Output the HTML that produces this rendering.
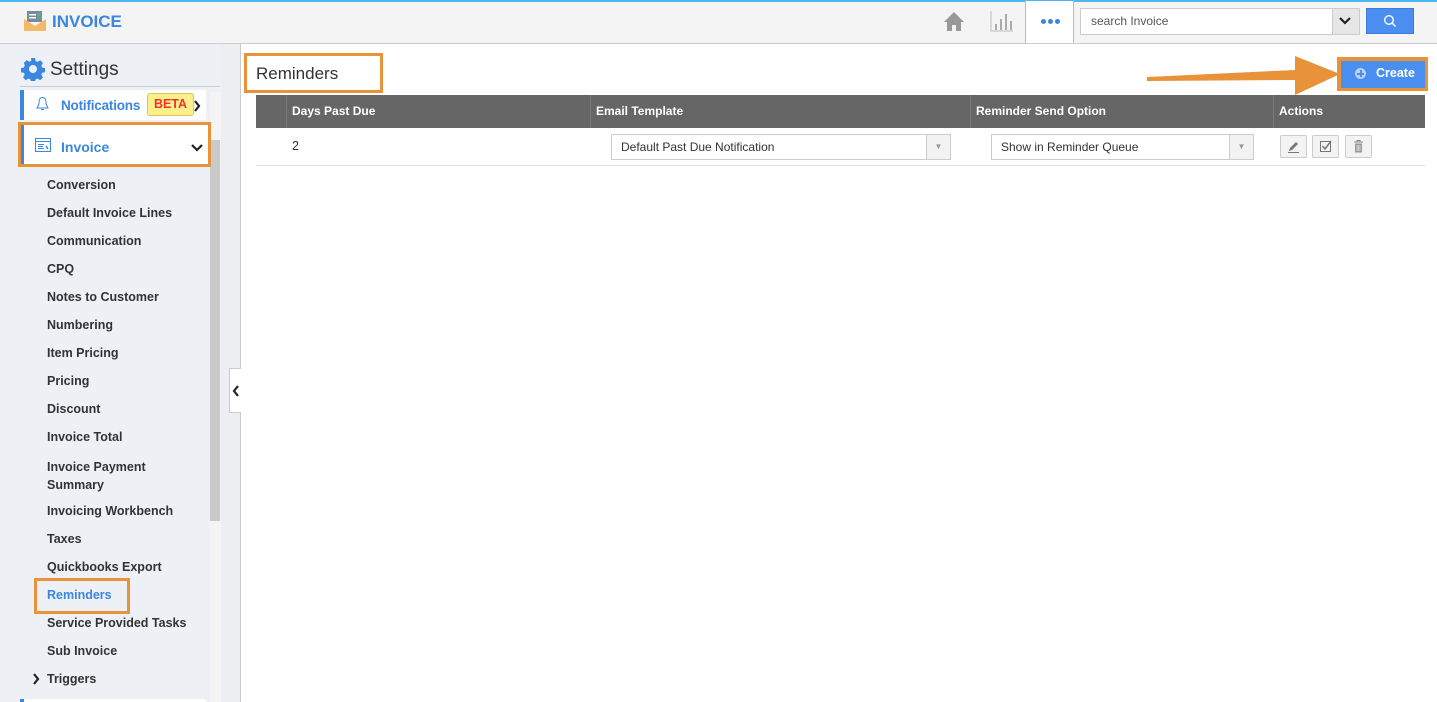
<!DOCTYPE html>
<html><head><meta charset="utf-8"><style>
*{box-sizing:border-box;margin:0;padding:0}
body{width:1437px;height:702px;overflow:hidden;font-family:"Liberation Sans",Arial,sans-serif;background:#fff;position:relative;color:#333}
.abs{position:absolute}
.top{left:0;top:0;width:1437px;height:44px;background:#f4f4f4;border-top:2px solid #4fb8f0;border-bottom:1px solid #ccc}
.side{left:0;top:44px;width:221px;height:658px;background:#edf0f5}
.item{position:absolute;left:47px;font-size:12.5px;font-weight:bold;color:#333}
.hd{position:absolute;top:95px;height:33px;background:#666;color:#fff;font-size:12px;font-weight:bold;line-height:33px}
.sel{position:absolute;height:26px;border:1px solid #ccc;background:#fff;font-size:12px;line-height:24px;padding-left:9px;color:#333}
.sel .ar{position:absolute;right:0;top:0;width:24px;height:24px;border-left:1px solid #ccc;background:#f2f2f2;color:#999;font-size:8px;text-align:center;line-height:24px}
.btn{position:absolute;top:135px;width:27px;height:23px;border:1px solid #ccc;background:#f3f3f3;border-radius:2px}
.ob{position:absolute;border:3px solid #e8923a}
</style></head><body>
<div class="abs top"></div>
<svg class="abs" style="left:24px;top:10px" width="22" height="22" viewBox="0 0 22 22"><rect x="3" y="1" width="15" height="11" fill="#7a8a96"/><rect x="5" y="4" width="7" height="1.5" fill="#fff"/><rect x="5" y="7" width="7" height="1.5" fill="#fff"/><text x="13" y="8" font-size="7" fill="#4c8" font-family="Liberation Sans">$</text><path d="M0 9 L11 16 L22 9 V21 H0Z" fill="#f3b966"/></svg>
<div class="abs" style="left:52px;top:12px;font-size:17px;font-weight:bold;color:#3b86e0">INVOICE</div>
<svg class="abs" style="left:943px;top:10px" width="22" height="22" viewBox="0 0 22 22"><path d="M11 2 L1 12 H4 V21 H9 V15 H13 V21 H18 V12 H21Z" fill="#999"/></svg>
<svg class="abs" style="left:990px;top:10px" width="24" height="22" viewBox="0 0 24 22"><path d="M1 1 V21 H23" stroke="#bbb" fill="none"/><rect x="5" y="14" width="2" height="6" fill="#aaa"/><rect x="10" y="9" width="2" height="11" fill="#aaa"/><rect x="15" y="4" width="2" height="16" fill="#aaa"/><rect x="20" y="11" width="2" height="9" fill="#aaa"/></svg>
<div class="abs" style="left:1025px;top:1px;width:49px;height:42px;background:#fff;border-left:1px solid #bbb;border-right:1px solid #bbb"></div>
<div class="abs" style="left:1041px;top:19px;width:20px;height:6px;display:flex;gap:2px"><i style="width:5px;height:5px;border-radius:50%;background:#3b86e0"></i><i style="width:5px;height:5px;border-radius:50%;background:#3b86e0"></i><i style="width:5px;height:5px;border-radius:50%;background:#3b86e0"></i></div>
<div class="abs" style="left:1080px;top:8px;width:280px;height:27px;border:1px solid #ccc;background:#fff;font-size:12px;color:#555;line-height:25px;padding-left:10px">search Invoice</div>
<div class="abs" style="left:1332px;top:9px;width:27px;height:25px;background:#e6e6e6;border-left:1px solid #ccc"></div>
<svg class="abs" style="left:1339px;top:17px" width="12" height="8" viewBox="0 0 12 8"><path d="M1 1 L6 6 L11 1" stroke="#222" stroke-width="2.2" fill="none"/></svg>
<div class="abs" style="left:1366px;top:8px;width:48px;height:26px;background:#4a8ef0;border:1px solid #3a7de0"></div>
<svg class="abs" style="left:1383px;top:14px" width="14" height="14" viewBox="0 0 14 14"><circle cx="6" cy="6" r="4.3" stroke="#fff" stroke-width="1.4" fill="none"/><path d="M9 9 L12.5 12.5" stroke="#fff" stroke-width="1.5"/></svg>

<div class="abs side"></div>
<div class="abs" style="left:221px;top:44px;width:20px;height:658px;background:#eceef2;border-right:1px solid #ccc"></div>
<div class="abs" style="left:210px;top:92px;width:11px;height:610px;background:#f4f4f4"></div>
<div class="abs" style="left:210px;top:140px;width:10px;height:381px;background:#c9c9c9"></div>
<div class="abs" style="left:229px;top:368px;width:12px;height:45px;background:#fff;border:1px solid #ccc;border-right:none"></div>
<svg class="abs" style="left:232px;top:385px" width="8" height="12" viewBox="0 0 8 12"><path d="M6 1 L2 6 L6 11" stroke="#222" stroke-width="2.2" fill="none"/></svg>
<svg class="abs" style="left:21px;top:57px" width="24" height="24" viewBox="0 0 24 24"><path fill="#3b86e0" d="M10 1h4l.6 3 2 .9 2.6-1.7 2.8 2.8-1.7 2.6.9 2 3 .6v4l-3 .6-.9 2 1.7 2.6-2.8 2.8-2.6-1.7-2 .9-.6 3h-4l-.6-3-2-.9-2.6 1.7-2.8-2.8 1.7-2.6-.9-2-3-.6v-4l3-.6.9-2L2.9 5.9 5.7 3.1l2.6 1.7 2-.9z"/><circle cx="12" cy="12" r="4" fill="#edf0f5"/></svg>
<div class="abs" style="left:50px;top:59px;font-size:19px;color:#333">Settings</div>
<div class="abs" style="left:20px;top:86px;width:200px;height:1px;background:#ccc"></div>
<div class="abs" style="left:20px;top:90px;width:186px;height:30px;background:#fff;border-left:4px solid #3b86e0"></div>
<svg class="abs" style="left:35px;top:96px" width="15" height="16" viewBox="0 0 15 16"><path d="M7.5 1.5 C4 1.5 4 5 4 8 L2 12 H13 L11 8 C11 5 11 1.5 7.5 1.5Z M6 13.5 H9" stroke="#3b86e0" fill="none"/></svg>
<div class="abs" style="left:61px;top:98px;font-size:13.5px;font-weight:bold;color:#3b86e0;letter-spacing:-0.2px">Notifications</div>
<div class="abs" style="left:147px;top:93px;width:47px;height:23px;background:#fdf08a;border:1px solid #d8c85a;border-radius:3px;color:#e33;font-size:12.5px;font-weight:bold;text-align:center;line-height:21px">BETA</div>
<svg class="abs" style="left:193px;top:100px" width="8" height="12" viewBox="0 0 8 12"><path d="M2 1 L6 6 L2 11" stroke="#222" stroke-width="2.2" fill="none"/></svg>
<div class="abs" style="left:20px;top:125px;width:189px;height:40px;background:#fff;border-left:4px solid #3b86e0"></div>
<svg class="abs" style="left:35px;top:138px" width="16" height="14" viewBox="0 0 16 14"><rect x="0.5" y="0.5" width="15" height="13" stroke="#3b86e0" fill="none"/><path d="M0.5 3.5H15.5M3 6.5H9M3 8.5H8M3 10.5H9" stroke="#3b86e0"/><path d="M11 8 L13 11" stroke="#3b86e0" stroke-width="1.5"/></svg>
<div class="abs" style="left:61px;top:139px;font-size:14px;font-weight:bold;color:#3b86e0">Invoice</div>
<svg class="abs" style="left:191px;top:144px" width="12" height="8" viewBox="0 0 12 8"><path d="M1 1 L6 6 L11 1" stroke="#222" stroke-width="2.2" fill="none"/></svg>
<div class="ob" style="left:18px;top:122px;width:193px;height:45px"></div>

<div class="item" style="top:178px">Conversion</div>
<div class="item" style="top:206px">Default Invoice Lines</div>
<div class="item" style="top:234px">Communication</div>
<div class="item" style="top:262px">CPQ</div>
<div class="item" style="top:290px">Notes to Customer</div>
<div class="item" style="top:318px">Numbering</div>
<div class="item" style="top:346px">Item Pricing</div>
<div class="item" style="top:374px">Pricing</div>
<div class="item" style="top:402px">Discount</div>
<div class="item" style="top:430px">Invoice Total</div>
<div class="item" style="top:458px;line-height:18px">Invoice Payment<br>Summary</div>
<div class="item" style="top:504px">Invoicing Workbench</div>
<div class="item" style="top:532px">Taxes</div>
<div class="item" style="top:560px">Quickbooks Export</div>
<div class="item" style="top:588px;color:#3b86e0">Reminders</div>
<div class="ob" style="left:34px;top:578px;width:96px;height:36px"></div>
<div class="item" style="top:616px">Service Provided Tasks</div>
<div class="item" style="top:644px">Sub Invoice</div>
<div class="item" style="top:672px">Triggers</div>
<svg class="abs" style="left:32px;top:673px" width="8" height="12" viewBox="0 0 8 12"><path d="M2 1 L6 6 L2 11" stroke="#222" stroke-width="2.2" fill="none"/></svg>
<div class="abs" style="left:20px;top:699px;width:186px;height:3px;background:#fff;border-left:4px solid #3b86e0"></div>

<div class="abs" style="left:256px;top:64px;font-size:17px;color:#333">Reminders</div>
<div class="ob" style="left:244px;top:53px;width:139px;height:40px"></div>
<svg class="abs" style="left:1145px;top:54px" width="200" height="42" viewBox="0 0 200 42"><path d="M2 23 L150 16 L150 2 L195 20 L150 41 L150 26 L2 27Z" fill="#e8923a"/></svg>
<div class="abs" style="left:1337px;top:57px;width:91px;height:34px;background:#e8923a"></div>
<div class="abs" style="left:1341px;top:61px;width:84px;height:27px;background:#4a8ef0"></div>
<div class="abs" style="left:1355px;top:68px;width:11px;height:11px;border-radius:50%;background:#b9d2f8"></div>
<div class="abs" style="left:1357px;top:72.5px;width:7px;height:2px;background:#4a8ef0"></div>
<div class="abs" style="left:1359.5px;top:70px;width:2px;height:7px;background:#4a8ef0"></div>
<div class="abs" style="left:1376px;top:66px;font-size:12.5px;font-weight:bold;color:#fff">Create</div>

<div class="hd" style="left:256px;width:1169px"></div>
<div class="hd" style="left:286px;width:1px;background:#7a7a7a"></div>
<div class="hd" style="left:590px;width:1px;background:#7a7a7a"></div>
<div class="hd" style="left:970px;width:1px;background:#7a7a7a"></div>
<div class="hd" style="left:1273px;width:1px;background:#7a7a7a"></div>
<div class="hd" style="left:292px;background:none">Days Past Due</div>
<div class="hd" style="left:596px;background:none">Email Template</div>
<div class="hd" style="left:976px;background:none">Reminder Send Option</div>
<div class="hd" style="left:1279px;background:none">Actions</div>
<div class="abs" style="left:292px;top:139px;font-size:12.5px">2</div>
<div class="sel" style="left:611px;top:134px;width:340px">Default Past Due Notification<span class="ar">▼</span></div>
<div class="sel" style="left:991px;top:134px;width:263px">Show in Reminder Queue<span class="ar">▼</span></div>
<div class="btn" style="left:1280px"><svg width="25" height="21" viewBox="0 0 25 21"><path d="M8 15 L9 12 L15 6 L17 8 L11 14Z" fill="#777"/><path d="M7 16.5H18" stroke="#777"/></svg></div>
<div class="btn" style="left:1312px"><svg width="25" height="21" viewBox="0 0 25 21"><rect x="7.5" y="5.5" width="10" height="10" stroke="#777" fill="none"/><path d="M9.5 10 L12 13 L18 5" stroke="#777" stroke-width="1.5" fill="none"/></svg></div>
<div class="btn" style="left:1345px"><svg width="25" height="21" viewBox="0 0 25 21"><path d="M8 6H17M11 6V4.5H14V6" stroke="#888" fill="none"/><path d="M9 7.5H16V16.5H9Z" fill="#999"/><path d="M11 9V15M12.5 9V15M14 9V15" stroke="#eee" stroke-width=".7"/></svg></div>
<div class="abs" style="left:256px;top:165px;width:1169px;height:1px;background:#ddd"></div>
</body></html>
